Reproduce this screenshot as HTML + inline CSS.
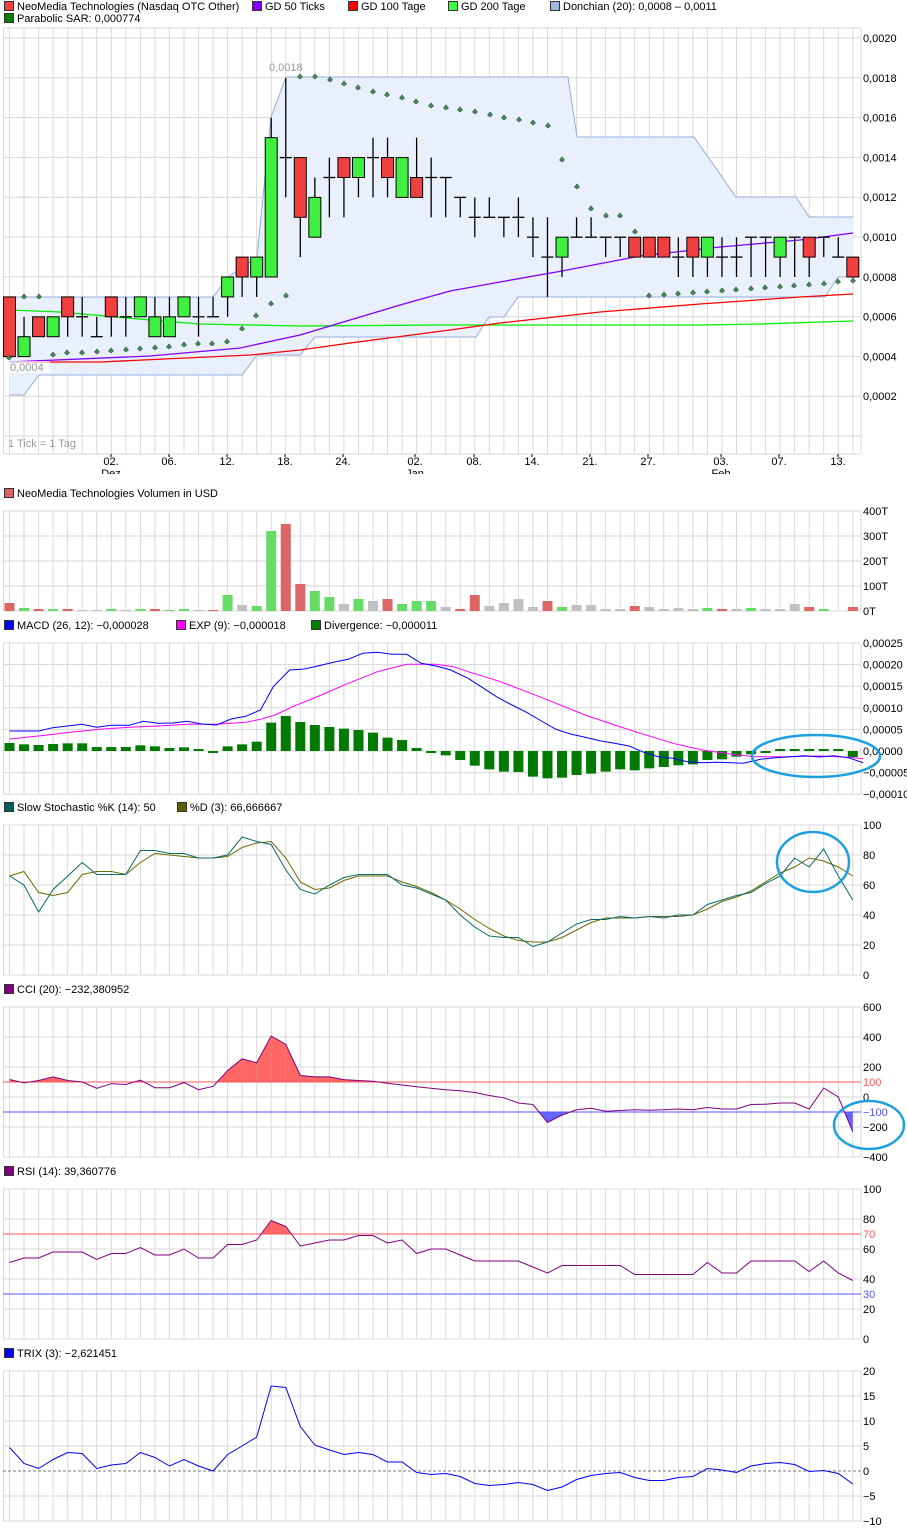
<!DOCTYPE html>
<html><head><meta charset="utf-8"><style>
html,body{margin:0;padding:0;background:#fff;}
svg{display:block;font-family:"Liberation Sans",Arial,sans-serif;font-size:11px;}
</style></head><body>
<svg id="s" width="907" height="1532" xmlns="http://www.w3.org/2000/svg"></svg>
<script>
var X=function(i){return 9.5+14.54*i;};
var o=[];
function L(x1,y1,x2,y2,c,w,extra){o.push('<line x1="'+x1+'" y1="'+y1+'" x2="'+x2+'" y2="'+y2+'" stroke="'+c+'" stroke-width="'+(w||1)+'" '+(extra||'')+'/>');}
function T(x,y,t,c,extra){o.push('<text x="'+x+'" y="'+y+'" fill="'+(c||'#000')+'" '+(extra||'')+'>'+t+'</text>');}
function P(pts,c,w,fill){o.push('<polyline points="'+pts.map(function(p){return p[0].toFixed(1)+','+p[1].toFixed(1);}).join(' ')+'" fill="'+(fill||'none')+'" stroke="'+c+'" stroke-width="'+(w||1)+'"/>');}
function grid(top,bot,hl){
  for(var i=0;i<59;i++)L(X(i).toFixed(1),top,X(i).toFixed(1),bot,'#d8d8d8');
  L(3.5,top,3.5,bot,'#d8d8d8');L(861,top,861,bot,'#d8d8d8');
  hl.forEach(function(y){L(3,y,861,y,'#d8d8d8');});
}
function leg(x,y,c,t){o.push('<rect x="'+(x+0.5)+'" y="'+(y-8.5)+'" width="9" height="9" fill="'+c+'" stroke="#333"/>');T(x+13,y,t);}
// legends
leg(4,10,'#f04040','NeoMedia Technologies (Nasdaq OTC Other)');
leg(252,10,'#8000ff','GD 50 Ticks');
leg(348,10,'#ff0000','GD 100 Tage');
leg(448,10,'#40ff40','GD 200 Tage');
leg(550,10,'#a0b8e0','Donchian (20): 0,0008 \u2013 0,0011');
leg(4,22,'#008000','Parabolic SAR: 0,000774');
// MAIN
var hl=[28,454];for(var k=0;k<=10;k++)hl.push(38+39.8*k);
grid(28,454,hl);
var py=function(v){return 277-(v-8)*19.9;};
var up=[[9.5,297],[213,297],[228,277],[257,257],[271,117],[286,77],[568,77],[577,137],[694,137],[736,197],[796,197],[809,217],[853,217]];
var lo=[[9.5,395],[24,395],[39,375],[242,375],[257,355],[300,355],[315,337],[476,337],[489,317],[504,317],[518,297],[825,297],[838,277],[853,277]];
o.push('<polygon points="'+up.concat(lo.slice().reverse()).map(function(p){return p.join(',');}).join(' ')+'" fill="#e9f0fb"/>');
P(up,'#94acdc');P(lo,'#94acdc');
P([[9,310],[60,312],[150,320],[200,324],[300,326],[440,325],[700,325],[760,324],[853,321]],'#00ee00',1.3);
P([[9,362],[100,362],[250,355],[300,350],[350,343],[450,330],[500,323],[600,312],[700,304],[800,297],[853,294]],'#ff0000',1.3);
P([[9,362],[150,356],[240,348],[300,335],[350,320],[400,305],[450,291],[500,282],[562,271],[640,256],[720,247],[800,240],[853,233]],'#8000ff',1.3);
var C=[[7,7,4,4],[4,6,4,5],[6,6,5,5],[5,6,5,6],[7,7,5,6],[6,7,5,6],[5,6,5,5],[7,7,5,6],[6,7,5,6],[6,7,6,7],[5,7,5,6],[5,7,5,6],[6,7,6,7],[6,7,5,6],[6,7,6,6],[7,8,6,8],[9,9,7,8],[8,9,7,9],[8,16,8,15],[14,18,12,14],[14,14,9,11],[10,13,10,12],[13,14,11,13],[14,14,11,13],[13,14,12,14],[14,15,12,14],[14,15,12,13],[12,14,12,14],[13,15,12,12],[13,14,11,13],[13,13,11,13],[12,12,11,12],[11,12,10,11],[11,12,11,11],[11,11,10,11],[11,12,10,11],[10,11,9,10],[9,11,7,9],[9,10,8,10],[10,11,10,10],[10,11,10,10],[10,10,9,10],[10,10,9,10],[10,10,9,9],[10,10,9,9],[10,10,9,9],[9,10,8,9],[10,10,8,9],[9,10,8,10],[9,10,8,9],[9,10,8,9],[10,10,8,10],[10,10,8,10],[9,10,8,10],[10,10,8,10],[10,10,8,9],[10,10,9,10],[9,10,9,9],[9,9,8,8]];
C.forEach(function(c,i){var x=X(i);L(x,py(c[1]),x,py(c[2]),'#000',1.3);
 if(c[0]==c[3]){L(x-6,py(c[0]),x+6,py(c[0]),'#000',1.3);}
 else{var a=py(Math.max(c[0],c[3])),b=py(Math.min(c[0],c[3]));o.push('<rect x="'+(x-6)+'" y="'+a+'" width="12" height="'+(b-a)+'" fill="'+(c[3]>c[0]?'#40f040':'#f04040')+'" stroke="#000" stroke-width="1"/>');}
});
var sar=[[9,358],[24,297],[39,297],[53,355],[67,353],[82,353],[97,352],[111,351],[126,350],[140,349],[155,348],[169,347],[184,345],[198,344],[212,344],[227,342],[242,329],[256,316],[271,304],[286,296],[300,77],[315,77],[330,80],[344,84],[358,88],[373,92],[387,95],[402,98],[416,102],[431,106],[446,108],[460,110],[475,112],[490,115],[504,118],[519,120],[533,123],[548,126],[562,160],[577,187],[591,209],[606,216],[620,216],[635,232],[649,296],[664,295],[678,294],[693,293],[707,292],[722,291],[736,290],[751,289],[765,288],[780,287],[794,286],[809,285],[824,284],[838,282],[853,281]];
sar.forEach(function(p){o.push('<polygon points="'+p[0]+','+(p[1]-3)+' '+(p[0]+2.5)+','+p[1]+' '+p[0]+','+(p[1]+2)+' '+(p[0]-2.5)+','+p[1]+'" fill="#4a8a5a" stroke="#2e5e3e" stroke-width="0.6"/>');});
T(269,71,'0,0018','#999');
o.push('<rect x="8" y="361" width="42" height="12" fill="#fff" opacity="0.7"/>');T(10,371,'0,0004','#999');
T(8,447,'1 Tick = 1 Tag','#999');
['0,0020','0,0018','0,0016','0,0014','0,0012','0,0010','0,0008','0,0006','0,0004','0,0002'].forEach(function(t,k){T(863,42+39.8*k,t);});
o.push('<defs><clipPath id="cx"><rect x="0" y="454" width="907" height="20"/></clipPath></defs><g clip-path="url(#cx)">');
[[111,'02.','Dez'],[169,'06.'],[227,'12.'],[285,'18.'],[343,'24.'],[415,'02.','Jan'],[474,'08.'],[532,'14.'],[590,'21.'],[648,'27.'],[721,'03.','Feb'],[779,'07.'],[838,'13.']].forEach(function(d){T(d[0],465,d[1],'#000','text-anchor="middle"');L(d[0],454,d[0],457,'#000');if(d[2])T(d[0],477,d[2],'#000','text-anchor="middle"');});
o.push('</g>');
// VOLUME
leg(4,497,'#e06060','NeoMedia Technologies Volumen in USD');
grid(511,611,[511,536,561,586,611]);
var V='r8 g3 r2 g2 r2 y1 y1 g2 y1 g2 r2 g1 g2 y1 r1 g16 y6 g5 g80 r87 r27 g20 g14 y7 g12 y10 r12 g7 g10 g10 y4 r2 r16 y5 y8 y12 y4 r10 g4 y6 y6 y2 y2 r5 y4 y2 y3 y2 g3 r2 y2 g3 y2 y2 y7 r4 g2 y0 r4'.split(' ');
var VC={r:'#dc6666',g:'#66dc66',y:'#c0c0c0'};
V.forEach(function(v,i){var h=+v.slice(1);if(h)o.push('<rect x="'+(X(i)-5)+'" y="'+(611-h)+'" width="10" height="'+h+'" fill="'+VC[v[0]]+'"/>');});
['400T','300T','200T','100T','0T'].forEach(function(t,k){T(863,515+25*k,t);});
// MACD
leg(4,629,'#0000ff','MACD (26, 12): \u22120,000028');
leg(176,629,'#ff00ff','EXP (9): \u22120,000018');
leg(311,629,'#008000','Divergence: \u22120,000011');
var mh=[];for(k=0;k<8;k++)mh.push(643+21.6*k);grid(643,795,mh);
var H=[24,20,18,21,23,23,12,12,12,17,14,9,11,5,-3,14,20,28,85,105,87,78,72,67,63,55,40,33,9,-5,-13,-27,-44,-55,-62,-63,-77,-82,-80,-72,-68,-62,-55,-58,-52,-48,-43,-40,-27,-25,-17,-10,-4,3,3,6,4,5,-18];
H.forEach(function(h,i){var r=h/3;var a=Math.min(751,751-r),hh=Math.max(2,Math.abs(r));o.push('<rect x="'+(X(i)-5)+'" y="'+(h>0?751-hh:751)+'" width="10" height="'+hh+'" fill="#007a00"/>');});
function Z(a,yo){return a.map(function(p){return [p[0]/1.709,yo+p[1]/3];});}
P(Z([[16,357],[66,348],[120,337],[170,328],[220,322],[270,318],[320,313],[370,313],[420,307],[445,298],[470,285],[500,260],[545,228],[595,190],[645,155],[695,133],[745,133],[775,140],[800,155],[850,182],[900,215],[950,250],[1000,285],[1050,315],[1100,343],[1150,370],[1200,390],[1250,403],[1290,410],[1350,410],[1400,408],[1450,412],[1475,416]],620),'#ff00ff');
P(Z([[16,333],[66,333],[90,323],[140,313],[165,322],[190,316],[220,316],[245,304],[270,310],[295,309],[320,304],[345,312],[370,315],[395,297],[420,289],[445,270],[467,200],[495,150],[520,147],[545,137],[570,127],[595,118],[620,100],[645,97],[670,103],[695,103],[720,130],[745,138],[770,150],[800,175],[825,203],[850,232],[875,255],[900,277],[925,303],[950,328],[975,342],[1000,352],[1025,362],[1050,370],[1075,378],[1100,397],[1125,410],[1150,415],[1175,425],[1200,428],[1225,427],[1250,428],[1270,430],[1300,418],[1325,413],[1350,410],[1375,407],[1400,411],[1425,407],[1450,413],[1475,428]],620),'#0000ff');
['0,00025','0,00020','0,00015','0,00010','0,00005','0,00000','\u22120,00005','\u22120,00010'].forEach(function(t,k){T(863,647+21.6*k,t);});
o.push('<ellipse cx="816" cy="756" rx="64" ry="21" fill="none" stroke="#1ea0e0" stroke-width="2.5"/>');
// STOCH
leg(4,811,'#006060','Slow Stochastic %K (14): 50');
leg(177,811,'#606000','%D (3): 66,666667');
grid(825,975,[825,855,885,915,945,975]);
function S(a,y0,sc){return a.map(function(v,i){return [X(i),y0-v*sc];});}
var K=[66,60,42,57,66,75,67,67,67,83,83,81,81,78,78,80,92,89,87,70,57,54,60,65,67,67,67,60,58,54,50,40,32,26,25,25,19,22,28,34,37,37,39,38,39,38,40,40,47,50,53,55,61,66,78,72,84,66,50];
var D=[66,69,55,53,55,67,69,69,67,75,81,80,79,78,78,79,85,88,89,78,62,57,58,63,66,66,66,62,59,55,50,44,37,31,26,23,22,22,25,30,35,38,38,38,39,39,39,40,44,49,52,56,62,68,72,78,76,72,66];
P(S(D,975,1.5),'#6a6a00');P(S(K,975,1.5),'#0a6a6a');
['100','80','60','40','20','0'].forEach(function(t,k){T(863,829+30*k,t);});
o.push('<ellipse cx="813" cy="862" rx="36" ry="30" fill="none" stroke="#1ea0e0" stroke-width="2.5"/>');
// CCI
leg(4,993,'#800080','CCI (20): \u2212232,380952');
grid(1007,1157,[1007,1037,1067,1097,1127,1157]);
var CC=[117,94,110,134,110,100,58,89,83,112,62,62,96,49,71,176,255,228,407,351,143,134,134,116,110,105,92,80,69,58,49,42,30,10,-5,-40,-50,-170,-120,-85,-75,-95,-90,-85,-88,-85,-80,-85,-70,-80,-80,-50,-48,-40,-40,-80,60,0,-232];
var cp=S(CC,1097,0.15);
// fills
function fillAbove(pts,lv,col,above){
  for(var i=0;i<pts.length-1;i++){var a=pts[i],b=pts[i+1];
    var ia=above?a[1]<lv:a[1]>lv, ib=above?b[1]<lv:b[1]>lv;
    if(!ia&&!ib)continue;
    var poly=[];
    if(ia&&ib){poly=[[a[0],lv],a,b,[b[0],lv]];}
    else{var t=(lv-a[1])/(b[1]-a[1]);var xm=a[0]+t*(b[0]-a[0]);poly=ia?[[a[0],lv],a,[xm,lv]]:[[xm,lv],b,[b[0],lv]];}
    o.push('<polygon points="'+poly.map(function(p){return p[0].toFixed(1)+','+p[1].toFixed(1);}).join(' ')+'" fill="'+col+'"/>');}
}
fillAbove(cp,1082,'#ff6666',true);fillAbove(cp,1112,'#6666ff',false);
L(3,1082,861,1082,'#ff5555');L(3,1112,861,1112,'#5555ff');
P(cp,'#800080');
T(863,1011,'600');T(863,1041,'400');T(863,1071,'200');T(863,1086,'100','#ff5555');T(863,1101,'0');T(863,1116,'\u2212100','#5555ff');T(863,1131,'\u2212200');T(863,1161,'\u2212400');
o.push('<ellipse cx="869" cy="1125" rx="35" ry="24" fill="none" stroke="#1ea0e0" stroke-width="2.5"/>');
// RSI
leg(4,1175,'#800080','RSI (14): 39,360776');
grid(1189,1339,[1189,1219,1249,1279,1309,1339]);
var R=[51,54,54,58,58,58,53,57,57,61,56,56,60,54,54,63,63,66,79,75,62,64,66,66,69,69,64,66,57,60,60,56,52,52,52,52,48,44,49,49,49,49,49,43,43,43,43,43,51,44,44,52,52,52,52,45,52,44,39];
var rp=S(R,1339,1.5);
fillAbove(rp,1234,'#ff6666',true);
L(3,1234,861,1234,'#ff5555');L(3,1294,861,1294,'#5555ff');
P(rp,'#800080');
T(863,1193,'100');T(863,1223,'80');T(863,1238,'70','#ff5555');T(863,1253,'60');T(863,1283,'40');T(863,1298,'30','#5555ff');T(863,1313,'20');T(863,1343,'0');
// TRIX
leg(4,1357,'#0000ff','TRIX (3): \u22122,621451');
grid(1371,1521,[1371,1396,1421,1446,1496,1521]);
L(3,1471,861,1471,'#777','1','stroke-dasharray="3,2"');
var TX=[4.7,1.5,0.5,2.3,3.7,3.5,0.5,1.2,1.5,3.7,2.7,1.0,2.3,1.0,0,3.3,5,6.8,17,16.7,8.9,5.2,4.2,3.3,3.7,3.3,1.8,1.8,-0.3,-0.7,-0.5,-1.1,-2.5,-2.9,-2.7,-2.3,-2.7,-3.9,-3.2,-1.7,-0.9,-0.5,-0.3,-1.3,-1.9,-1.9,-1.3,-1.1,0.5,0.2,-0.3,1.0,1.5,1.7,1.3,-0.1,0.1,-0.5,-2.6];
P(S(TX,1471,5),'#0000ff');
['20','15','10','5','0','\u22125','\u221210'].forEach(function(t,k){T(863,1375+25*k,t);});
document.getElementById('s').innerHTML=o.join('');
</script>
</body></html>
